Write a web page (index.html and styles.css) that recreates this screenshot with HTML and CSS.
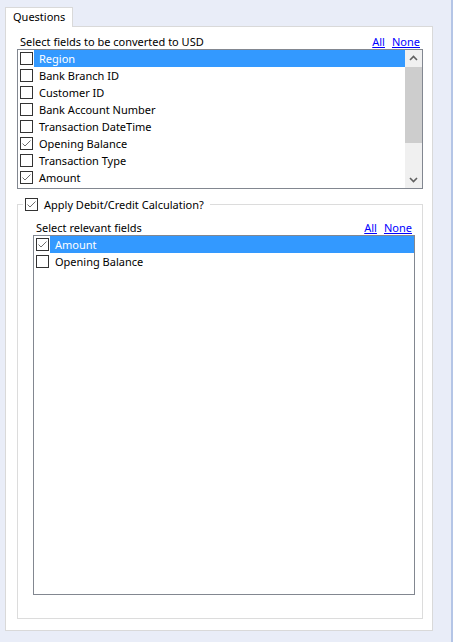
FILE: index.html
```html
<!DOCTYPE html>
<html>
<head>
<meta charset="utf-8">
<link rel="stylesheet" href="styles.css">
</head>
<body>
<div class="window">
  <div class="content">
    <div class="tab">Questions</div>
    <div class="panel">
      <div class="label-row">
        <span>Select fields to be converted to USD</span>
        <span class="links"><a href="#">All</a><a href="#">None</a></span>
      </div>
      <div class="list list-top">
        <div class="rows">
          <div class="row selected"><span class="cb"></span><span class="txt">Region</span></div>
          <div class="row"><span class="cb"></span><span class="txt">Bank Branch ID</span></div>
          <div class="row"><span class="cb"></span><span class="txt">Customer ID</span></div>
          <div class="row"><span class="cb"></span><span class="txt">Bank Account Number</span></div>
          <div class="row"><span class="cb"></span><span class="txt">Transaction DateTime</span></div>
          <div class="row"><span class="cb checked"><svg viewBox="0 0 11 11" width="11" height="11"><path d="M1.5 5.5 L4 8 L9.5 2.5" /></svg></span><span class="txt">Opening Balance</span></div>
          <div class="row"><span class="cb"></span><span class="txt">Transaction Type</span></div>
          <div class="row"><span class="cb checked"><svg viewBox="0 0 11 11" width="11" height="11"><path d="M1.5 5.5 L4 8 L9.5 2.5" /></svg></span><span class="txt">Amount</span></div>
        </div>
        <div class="scrollbar">
          <div class="sb-btn"><svg viewBox="0 0 17 17" width="17" height="17"><path d="M5 10 L8.5 6.5 L12 10" /></svg></div>
          <div class="sb-thumb"></div>
          <div class="sb-track"></div>
          <div class="sb-btn"><svg viewBox="0 0 17 17" width="17" height="17"><path d="M5 7 L8.5 10.5 L12 7" /></svg></div>
        </div>
      </div>
      <fieldset class="group">
        <legend class="legend"><span class="cb checked"><svg viewBox="0 0 11 11" width="11" height="11"><path d="M1.5 5.5 L4 8 L9.5 2.5" /></svg></span><span>Apply Debit/Credit Calculation?</span></legend>
        <div class="label-row label-inner">
          <span>Select relevant fields</span>
          <span class="links"><a href="#">All</a><a href="#">None</a></span>
        </div>
        <div class="list list-bottom">
          <div class="rows">
            <div class="row selected"><span class="cb checked"><svg viewBox="0 0 11 11" width="11" height="11"><path d="M1.5 5.5 L4 8 L9.5 2.5" /></svg></span><span class="txt">Amount</span></div>
            <div class="row"><span class="cb"></span><span class="txt">Opening Balance</span></div>
          </div>
        </div>
      </fieldset>
    </div>
  </div>
  <div class="edge"></div>
</div>
</body>
</html>
```
FILE: styles.css
```css
* { box-sizing: border-box; }
html, body { margin: 0; padding: 0; }
body {
  width: 453px;
  height: 642px;
  background: #e9edf8;
  font-family: "Noto Sans", "Open Sans", sans-serif;
  font-size: 11px;
  color: #000;
  overflow: hidden;
}
.window { display: flex; height: 642px; }
.content { width: 451px; padding: 7px 0 0 5px; }
.edge { width: 2px; background: #b4c5e6; }

.tab {
  position: relative;
  z-index: 1;
  width: 68px;
  height: 20px;
  margin-bottom: -1px;
  padding-left: 7px;
  line-height: 18px;
  background: #fff;
  border: 1px solid #d9d9d9;
  border-bottom: none;
}
.panel {
  width: 428px;
  height: 605px;
  background: #fff;
  border: 1px solid #d9d9d9;
  padding: 7px 9px 0 11px;
}
.label-row {
  display: flex;
  justify-content: space-between;
  height: 15px;
  line-height: 15px;
  padding: 0 3px;
}
.links { display: flex; gap: 7px; }
.links a { color: #0000ff; text-decoration: underline; }

.list {
  display: flex;
  background: #fff;
  border: 1px solid #828790;
}
.list-top { height: 140px; }
.list-bottom { height: 360px; }
.rows { flex: 1; display: flex; flex-direction: column; }
.row {
  display: flex;
  align-items: center;
  height: 17px;
  padding-left: 2px;
}
.cb {
  flex: none;
  display: flex;
  align-items: center;
  justify-content: center;
  width: 13px;
  height: 13px;
  border: 1px solid #333;
  background: #fff;
}
.cb svg path { fill: none; stroke: #6e6e6e; stroke-width: 1; }
.txt {
  flex: 1;
  height: 17px;
  line-height: 17px;
  margin-left: 1px;
  padding-left: 5px;
}
.row.selected .txt { background: #3399ff; color: #fff; }

.scrollbar {
  width: 17px;
  display: flex;
  flex-direction: column;
  background: #f0f0f0;
}
.sb-btn { height: 17px; flex: none; }
.sb-btn svg path { fill: none; stroke: #606060; stroke-width: 1.6; }
.sb-thumb { height: 76px; background: #cdcdcd; flex: none; }
.sb-track { flex: 1; }

.group {
  margin: 8px 0 0 0;
  padding: 0 7px 23px 15px;
  border: 1px solid #dcdcdc;
  min-width: 0;
}
.legend {
  display: flex;
  align-items: center;
  height: 15px;
  line-height: 15px;
  margin-left: -10px;
  padding: 0 6px 0 2px;
}
.legend .cb { margin-right: 6px; }
.label-inner { margin-top: 8px; }
```
